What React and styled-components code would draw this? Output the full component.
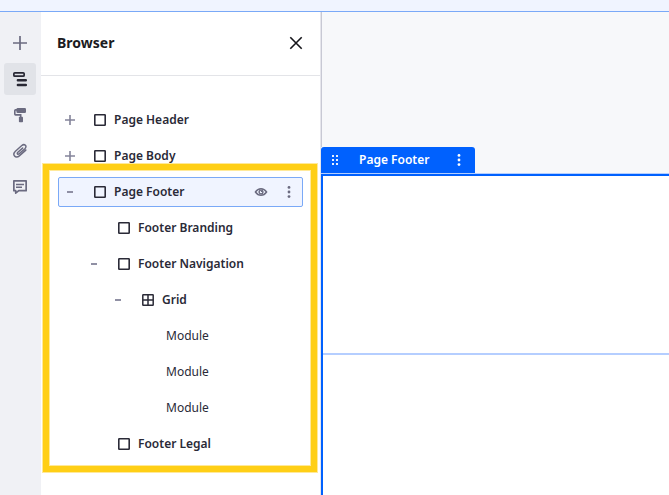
import React from "react";
import styled, { createGlobalStyle, css } from "styled-components";

const Global = createGlobalStyle`
  *, *::before, *::after { box-sizing: border-box; }
  html, body { margin: 0; padding: 0; overflow: hidden; }
  body { font-family: "Noto Sans", sans-serif; color: #2a2a37; background: #fff; }
`;

const Page = styled.div`
  display: flex;
  flex-direction: column;
  width: 669px;
  height: 495px;
  position: relative;
  overflow: hidden;
`;

const TopBar = styled.div`
  flex: none;
  height: 12px;
  background: #f0f4ff;
  border-bottom: 1px solid #7aa9f7;
`;

const Workspace = styled.div`
  flex: 1;
  display: flex;
  min-height: 0;
`;

const Rail = styled.nav`
  flex: none;
  width: 41px;
  padding: 15px 0 0 4px;
  display: flex;
  flex-direction: column;
  gap: 4px;
  background: #f0f1f5;
`;

const RailButton = styled.button`
  display: flex;
  align-items: center;
  justify-content: center;
  width: 32px;
  height: 32px;
  padding: 0;
  border: 0;
  border-radius: 3px;
  color: ${(p) => (p.$active ? "#272733" : "#6b6b80")};
  background: ${(p) => (p.$active ? "#e1e3e8" : "transparent")};
`;

const Panel = styled.aside`
  flex: none;
  width: 280px;
  display: flex;
  flex-direction: column;
  background: #fff;
  border-right: 1px solid #e6e6ec;
`;

const PanelHeader = styled.header`
  height: 64px;
  flex: none;
  display: flex;
  align-items: center;
  justify-content: space-between;
  padding: 0 16px 2px 16px;
  border-bottom: 1px solid #e3e4e8;
`;

const PanelTitle = styled.h1`
  margin: 0;
  font-size: 14px;
  line-height: 20px;
  font-weight: 700;
  color: #1b1b22;
`;

const CloseButton = styled.button`
  display: flex;
  padding: 0;
  border: 0;
  background: none;
  color: #15151a;
`;

const Tree = styled.ul`
  list-style: none;
  margin: 0;
  padding: 29px 17px 0;
  display: flex;
  flex-direction: column;
  gap: 6px;
`;

const TreeRow = styled.li`
  height: 30px;
  display: flex;
  align-items: center;
  padding-left: ${(p) => p.$depth * 24 + 3}px;
  padding-right: 5px;
  border: 1px solid transparent;
  border-radius: 2px;
  ${(p) =>
    p.$selected &&
    css`
      background: #f0f4ff;
      border-color: #7aa9f7;
    `}
`;

const Toggle = styled.span`
  flex: none;
  display: flex;
  width: 16px;
  margin-right: 14px;
  color: #84849a;
`;

const NodeIcon = styled.span`
  flex: none;
  display: flex;
  width: 16px;
  margin-right: 6px;
  color: #2a2a37;
`;

const NodeLabel = styled.span`
  flex: 1;
  font-size: 12px;
  line-height: 18px;
  font-weight: ${(p) => (p.$leaf ? 400 : 600)};
  white-space: nowrap;
  color: #2a2a37;
  margin-left: ${(p) => (p.$leaf ? "-20px" : 0)};
`;

const RowActions = styled.span`
  display: flex;
  gap: 12px;
  color: #6b6b80;
`;

const Canvas = styled.main`
  flex: 1;
  display: flex;
  flex-direction: column;
  min-width: 0;
`;

const CanvasTop = styled.div`
  height: 135px;
  flex: none;
  background: #f7f8fa;
  border-left: 1px solid #c8c9d4;
`;

const TabStrip = styled.div`
  height: 27px;
  flex: none;
  display: flex;
  background: #f7f8fa;
  border-bottom: 1px solid #b5ceff;
`;

const SelectionTab = styled.div`
  width: 154px;
  height: 26px;
  display: flex;
  align-items: center;
  padding: 0 8px 0 6px;
  color: #fff;
  background: #0061fe;
  border-radius: 3px 3px 0 0;
`;

const TabLabel = styled.span`
  flex: 1;
  padding-left: 16px;
  font-size: 12px;
  line-height: 18px;
  font-weight: 600;
  white-space: nowrap;
`;

const SelectedSection = styled.section`
  flex: 1;
  border-top: 2px solid #0061fe;
  border-left: 2px solid #0061fe;
  background: #fff;
`;

const SectionSlot = styled.div`
  height: 179px;
  border-bottom: 2px solid #b5ceff;
`;

const Highlight = styled.div`
  position: absolute;
  left: 43px;
  top: 164px;
  width: 274px;
  height: 308px;
  border: 6px solid #ffcf16;
  box-shadow: 0 0 0 1px #ffe99a, inset 0 0 0 1px #ffe99a;
  pointer-events: none;
`;

const Icon = ({ children, ...rest }) => (
  <svg width="16" height="16" viewBox="0 0 16 16" fill="none" stroke="currentColor" {...rest}>
    {children}
  </svg>
);

const AddIcon = () => (
  <Icon strokeWidth="1.7"><path d="M8 1v14M1 8h14" /></Icon>
);

const TreeIcon = () => (
  <Icon strokeWidth="1.7">
    <rect x="1.85" y="1.85" width="10.3" height="3.3" rx="1" />
    <path d="M5.9 9.3h7.9M5.9 13.9h7.9" strokeWidth="2.5" strokeLinecap="round" />
  </Icon>
);

const RollerIcon = () => (
  <Icon strokeWidth="1.6">
    <rect x="4.4" y="1" width="9.6" height="5" rx="1.3" fill="currentColor" stroke="none" />
    <path d="M5 2.9H3.6Q2.8 2.9 2.8 3.7V7.1Q2.8 7.9 3.6 7.9H8.7V10.5" />
    <rect x="6.9" y="9.8" width="4.1" height="5.4" rx=".8" fill="currentColor" stroke="none" />
  </Icon>
);

const ClipIcon = () => (
  <Icon strokeWidth="1.5" strokeLinecap="round">
    <path d="M10.6 5.1 5.9 9.3C4.6 10.6 5.8 11.9 7.1 10.8L12.9 5.7C15.6 3.1 12.5.3 9.8 2.5L3.4 8.2C-.2 11.6 3.5 16.1 7.3 12.9L13.8 7.1" />
  </Icon>
);

const CommentIcon = () => (
  <Icon strokeWidth="1.7">
    <path d="M1.85 1.85h12.3v9.8H6.8L3.7 14.1v-2.45H1.85Z" strokeLinejoin="round" />
    <path d="M4 5.4h8M4 8.2h6" strokeWidth="1.5" />
  </Icon>
);

const CloseIcon = () => (
  <Icon strokeWidth="1.6"><path d="m2.3 2.3 11.4 11.4M13.7 2.3 2.3 13.7" /></Icon>
);

const ExpandIcon = () => (
  <Icon strokeWidth="1.6"><path d="M8 3v10M3 8h10" /></Icon>
);

const CollapseIcon = () => (
  <Icon strokeWidth="1.8"><path d="M5 8h6" /></Icon>
);

const BoxIcon = () => (
  <Icon strokeWidth="1.6"><rect x="2.8" y="2.8" width="10.4" height="10.4" rx=".5" /></Icon>
);

const GridIcon = () => (
  <Icon strokeWidth="1.5">
    <rect x="2.8" y="2.8" width="10.4" height="10.4" rx=".5" />
    <path d="M8 3v10M3 8h10" />
  </Icon>
);

const EyeIcon = () => (
  <Icon strokeWidth="1.4">
    <path d="M2.4 8Q4.6 4.8 8 4.8T13.6 8Q11.4 11.2 8 11.2T2.4 8Z" />
    <circle cx="8" cy="8" r="1.9" />
    <circle cx="8.5" cy="7.4" r=".7" fill="currentColor" stroke="none" />
  </Icon>
);

const MoreIcon = () => (
  <Icon fill="currentColor" stroke="none">
    <circle cx="8" cy="3.4" r="1.4" />
    <circle cx="8" cy="8" r="1.4" />
    <circle cx="8" cy="12.6" r="1.4" />
  </Icon>
);

const GripIcon = () => (
  <Icon fill="currentColor" stroke="none" opacity=".9">
    {[3, 7, 11].map((y) => (
      <React.Fragment key={y}>
        <rect x="5" y={y} width="2" height="2" />
        <rect x="9" y={y} width="2" height="2" />
      </React.Fragment>
    ))}
  </Icon>
);

const railItems = [
  { id: "Add", Glyph: AddIcon },
  { id: "Browser", Glyph: TreeIcon, active: true },
  { id: "Theme", Glyph: RollerIcon },
  { id: "Attachments", Glyph: ClipIcon },
  { id: "Comments", Glyph: CommentIcon },
];

const nodes = [
  { label: "Page Header", depth: 0, toggle: "closed", Glyph: BoxIcon },
  { label: "Page Body", depth: 0, toggle: "closed", Glyph: BoxIcon },
  { label: "Page Footer", depth: 0, toggle: "open", Glyph: BoxIcon, selected: true },
  { label: "Footer Branding", depth: 1, Glyph: BoxIcon },
  { label: "Footer Navigation", depth: 1, toggle: "open", Glyph: BoxIcon },
  { label: "Grid", depth: 2, toggle: "open", Glyph: GridIcon },
  { label: "Module", depth: 3 },
  { label: "Module", depth: 3 },
  { label: "Module", depth: 3 },
  { label: "Footer Legal", depth: 1, Glyph: BoxIcon },
];

const TreeNode = ({ label, depth, toggle, Glyph, selected }) => (
  <TreeRow $depth={depth} $selected={selected}>
    <Toggle>
      {toggle === "closed" && <ExpandIcon />}
      {toggle === "open" && <CollapseIcon />}
    </Toggle>
    <NodeIcon>{Glyph && <Glyph />}</NodeIcon>
    <NodeLabel $leaf={!Glyph}>{label}</NodeLabel>
    {selected && (
      <RowActions>
        <EyeIcon />
        <MoreIcon />
      </RowActions>
    )}
  </TreeRow>
);

export default function App() {
  return (
    <>
      <Global />
      <Page>
        <TopBar />
        <Workspace>
          <Rail>
            {railItems.map(({ id, Glyph, active }) => (
              <RailButton key={id} $active={active}>
                <Glyph />
              </RailButton>
            ))}
          </Rail>
          <Panel>
            <PanelHeader>
              <PanelTitle>Browser</PanelTitle>
              <CloseButton>
                <CloseIcon />
              </CloseButton>
            </PanelHeader>
            <Tree>
              {nodes.map((node, i) => (
                <TreeNode key={i} {...node} />
              ))}
            </Tree>
          </Panel>
          <Canvas>
            <CanvasTop />
            <TabStrip>
              <SelectionTab>
                <GripIcon />
                <TabLabel>Page Footer</TabLabel>
                <MoreIcon />
              </SelectionTab>
            </TabStrip>
            <SelectedSection>
              <SectionSlot />
            </SelectedSection>
          </Canvas>
        </Workspace>
        <Highlight />
      </Page>
    </>
  );
}
